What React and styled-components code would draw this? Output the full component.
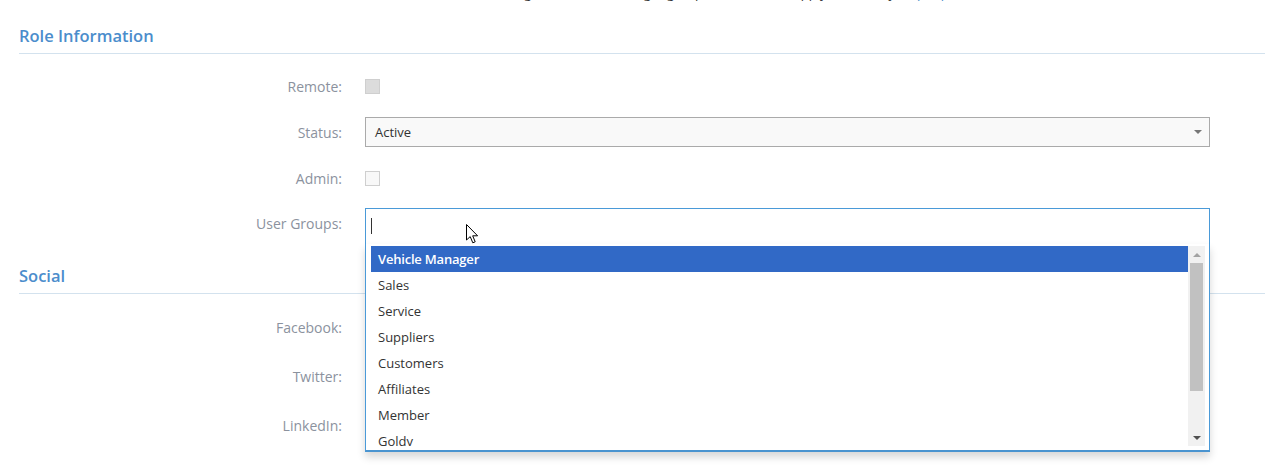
import React from 'react';
import styled, {createGlobalStyle} from 'styled-components';

const GlobalStyle = createGlobalStyle`
    html, body {
        margin: 0;
        padding: 0;
        background: #fff;
        overflow: hidden;
    }
    body {
        font-family: "Open Sans", "Liberation Sans", sans-serif;
    }
`;

const GROUPS = ['Vehicle Manager', 'Sales', 'Service', 'Suppliers', 'Customers', 'Affiliates', 'Member', 'Goldy', 'Partners'];

const Checkbox = ({disabled}) => <Check disabled={disabled}/>;

const Cursor = () => (
    <Pointer width="13" height="20" viewBox="0 0 13 20">
        <path d="M0.5 0.5 L0.5 16 L4.2 12.6 L6.8 18.8 L9.2 17.8 L6.7 11.8 L11.6 11.8 Z" fill="#fff" stroke="#000" strokeWidth="1" strokeLinejoin="round"/>
    </Pointer>
);

const App = () => {
    return (
        <Page>
            <GlobalStyle/>
            <Note>
                Set the role details below and assign the user to the right groups, then save to apply it for every
                <NoteLink> help topic</NoteLink>
            </Note>

            <SectionTitle>Role Information</SectionTitle>
            <Fields gap={16}>
                <Row>
                    <Label>Remote:</Label>
                    <Value><Checkbox disabled/></Value>
                </Row>
                <Row>
                    <Label>Status:</Label>
                    <Select>Active</Select>
                </Row>
                <Row>
                    <Label>Admin:</Label>
                    <Value><Checkbox/></Value>
                </Row>
                <Row snug>
                    <Label top>User Groups:</Label>
                    <Combo>
                        <SearchBox><Caret/></SearchBox>
                        <Cursor/>
                        <Dropdown>
                            <Options>
                                {GROUPS.map((g, i) => (
                                    <Option key={g} active={i === 0}>{g}</Option>
                                ))}
                            </Options>
                            <Scrollbar>
                                <ScrollButton><Arrow up/></ScrollButton>
                                <Thumb/>
                                <ScrollButton><Arrow/></ScrollButton>
                            </Scrollbar>
                        </Dropdown>
                    </Combo>
                </Row>
            </Fields>

            <SectionTitle spaced>Social</SectionTitle>
            <Fields gap={15}>
                <Row tall>
                    <Label>Facebook:</Label>
                    <TextInput/>
                </Row>
                <Row tall>
                    <Label>Twitter:</Label>
                    <TextInput/>
                </Row>
                <Row tall>
                    <Label>LinkedIn:</Label>
                    <TextInput/>
                </Row>
            </Fields>
        </Page>
    );
};

export default App;

const Page = styled.div`
    padding: 0 0 0 19px;
    width: 1246px;
    height: 466px;
    overflow: hidden;
    color: #333;
`;

const Note = styled.p`
    margin: -16px 0 0;
    padding-left: 300px;
    height: 19px;
    line-height: 18px;
    font-size: 13px;
    white-space: nowrap;
    color: #333;
`;

const NoteLink = styled.span`
    color: #428bca;
`;

const SectionTitle = styled.h3`
    margin: ${p => p.spaced ? '21px' : '22px'} 0 0;
    padding-bottom: 6px;
    font-size: 16.5px;
    line-height: 22px;
    font-weight: 600;
    color: #4b8dcc;
    border-bottom: 1px solid #d3e2ee;
`;

const Fields = styled.div`
    display: flex;
    flex-direction: column;
    gap: ${p => p.gap}px;
    padding-top: ${p => p.gap + 1}px;
`;

const Row = styled.div`
    display: grid;
    grid-template-columns: 323px 845px;
    column-gap: 23px;
    align-items: center;
    min-height: ${p => p.tall ? 34 : 30}px;
    margin-top: ${p => p.snug ? '-1px' : '0'};
`;

const Label = styled.label`
    align-self: ${p => p.top ? 'start' : 'center'};
    margin-top: ${p => p.top ? '6px' : '0'};
    text-align: right;
    font-size: 14px;
    line-height: 19px;
    color: #8b929e;
`;

const Value = styled.div`
    display: flex;
    align-items: center;
`;

const Check = styled.span`
    display: block;
    width: 13px;
    height: 13px;
    border: 1px solid #cfcfcf;
    background: ${p => p.disabled ? '#dcdcdc' : '#f8f8f8'};
`;

const Select = styled.div`
    position: relative;
    box-sizing: border-box;
    height: 30px;
    line-height: 28px;
    padding-left: 9px;
    font-size: 13px;
    color: #333;
    background: #f9f9f9;
    border: 1px solid #aaa;
    &::after {
        content: '';
        position: absolute;
        right: 7px;
        top: 12px;
        border-left: 4px solid transparent;
        border-right: 4px solid transparent;
        border-top: 4px solid #777;
    }
`;

const Combo = styled.div`
    position: relative;
`;

const SearchBox = styled.div`
    box-sizing: border-box;
    height: 36px;
    display: flex;
    align-items: center;
    padding-left: 5px;
    border: 1px solid #4a9ad8;
    border-bottom: none;
    background: #fff;
`;

const Caret = styled.span`
    display: block;
    width: 1px;
    height: 16px;
    margin-top: -2px;
    background: #333;
`;

const Pointer = styled.svg`
    position: absolute;
    left: 101px;
    top: 16px;
    z-index: 3;
`;

const Dropdown = styled.div`
    position: absolute;
    top: 100%;
    left: 0;
    z-index: 2;
    box-sizing: border-box;
    width: 845px;
    display: flex;
    padding: 2px 4px 4px 5px;
    background: #fff;
    border: 1px solid #4a9ad8;
    border-top: none;
    border-bottom: 2px solid #4a94d0;
    box-shadow: 0 5px 8px rgba(0, 0, 0, 0.16);
`;

const Options = styled.ul`
    flex: 1;
    height: 200px;
    margin: 0;
    padding: 0;
    list-style: none;
    overflow: hidden;
`;

const Option = styled.li`
    height: 26px;
    line-height: 26px;
    padding-left: 7px;
    font-size: 13px;
    font-weight: ${p => p.active ? 600 : 400};
    letter-spacing: ${p => p.active ? '-0.2px' : '0'};
    color: ${p => p.active ? '#fff' : '#333'};
    background: ${p => p.active ? '#3169c6' : 'transparent'};
`;

const Scrollbar = styled.div`
    width: 17px;
    height: 200px;
    display: flex;
    flex-direction: column;
    align-items: center;
    background: #f1f1f1;
`;

const ScrollButton = styled.div`
    height: 17px;
    width: 100%;
    display: flex;
    align-items: center;
    justify-content: center;
    &:last-child {
        margin-top: auto;
    }
`;

const Arrow = styled.span`
    width: 0;
    height: 0;
    border-left: 4px solid transparent;
    border-right: 4px solid transparent;
    ${p => p.up
        ? 'border-bottom: 4px solid #a3a3a3;'
        : 'border-top: 4px solid #505050;'}
`;

const Thumb = styled.div`
    width: 13px;
    height: 128px;
    background: #c1c1c1;
`;

const TextInput = styled.div`
    box-sizing: border-box;
    height: 34px;
    border: 1px solid #ccc;
    background: #fff;
`;
